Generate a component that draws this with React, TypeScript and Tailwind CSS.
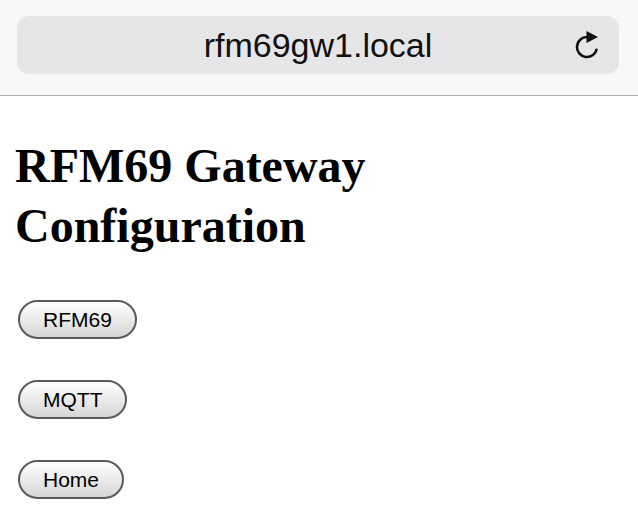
import React from "react";

const LINKS = ["RFM69", "MQTT", "Home"];

function ReloadIcon() {
  return (
    <svg width="28" height="28" viewBox="0 0 28 28" fill="none">
      <path
        d="M23.8 17.8 A10 10 0 1 1 14 6"
        stroke="#111"
        strokeWidth="2.6"
        strokeLinecap="butt"
      />
      <path d="M13.5 0 L25 6 L13.5 12 Z" fill="#111" />
    </svg>
  );
}

export default function App() {
  return (
    <div className="min-h-screen bg-white">
      {/* Address bar */}
      <div className="h-[96px] border-b border-[#b0b0b0] bg-[#f8f8f8] pl-[17px] pr-[19px] pt-[16px]">
        <div className="relative flex h-[58px] items-center justify-center rounded-[12px] bg-[#e6e6e8]">
          <span className="font-['Liberation_Sans',Arial,sans-serif] text-[34px] leading-none text-[#111]">
            rfm69gw1.local
          </span>
          <div className="absolute right-[18px] top-[15px] flex">
            <ReloadIcon />
          </div>
        </div>
      </div>

      {/* Page */}
      <div className="px-[15px]">
        <h1 className="mt-[40px] mb-[44px] font-['Liberation_Serif','Times_New_Roman',serif] text-[48px] font-bold leading-[60px] text-black">
          RFM69 Gateway
          <br />
          Configuration
        </h1>
        <div className="flex flex-col items-start gap-[41px] pl-[3px]">
          {LINKS.map((l) => (
            <button
              key={l}
              className="h-[39px] rounded-full border-2 border-[#5a5a5a] bg-gradient-to-b from-white to-[#d6d6d6] px-[23px] font-['Liberation_Sans',Arial,sans-serif] text-[21px] leading-none text-black"
            >
              {l}
            </button>
          ))}
        </div>
      </div>
    </div>
  );
}
